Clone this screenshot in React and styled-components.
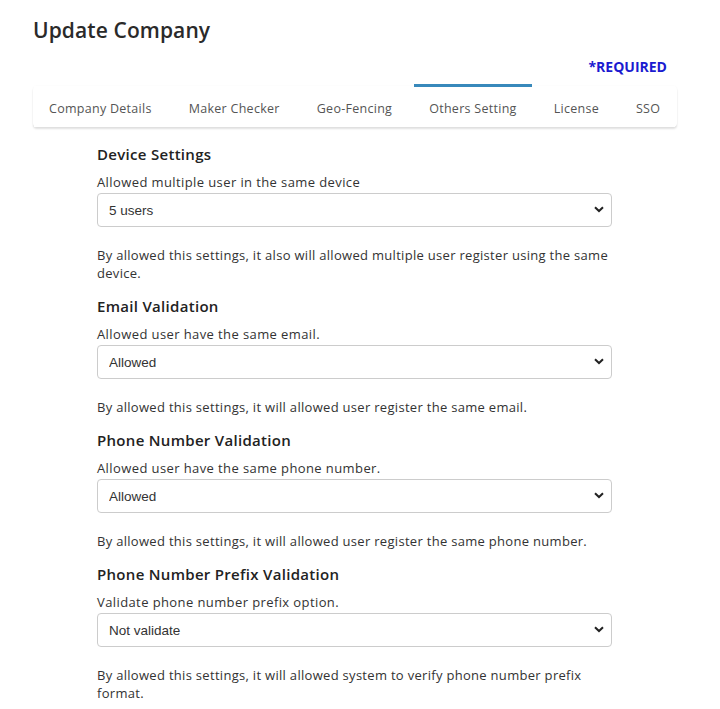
import React from 'react'
import styled, { createGlobalStyle } from 'styled-components'

const GlobalStyle = createGlobalStyle`
  body {
    margin: 0;
    background: #fff;
    font-family: "Open Sans", "Noto Sans", sans-serif;
    color: #333;
  }
`

const Page = styled.div`
  width: 720px;
  height: 709px;
  overflow: hidden;
  padding: 16px 43px 0 33px;
  box-sizing: border-box;
`

const Title = styled.h1`
  margin: 0;
  font-size: 21px;
  font-weight: 600;
  color: #2a2a2a;
  letter-spacing: 0.1px;
  line-height: 28px;
`

const Required = styled.div`
  text-align: right;
  margin: 13px 10px 0 0;
  font-size: 14px;
  font-weight: 700;
  color: #1b1bd0;
  line-height: 20px;
`

const TabBar = styled.div`
  display: flex;
  gap: 7px;
  margin-top: 9px;
  padding-left: 1px;
  height: 41px;
  background: #fff;
  border-radius: 4px;
  box-shadow: 0 2px 2px rgba(0, 0, 0, 0.12), 0 0 2px rgba(0, 0, 0, 0.04);
`

const Tab = styled.div`
  display: flex;
  align-items: center;
  flex-shrink: 0;
  white-space: nowrap;
  padding: 0 15px;
  font-size: 12.5px;
  letter-spacing: 0.28px;
  color: #555;
  background: #fff;
  box-sizing: border-box;
  height: ${p => (p.$active ? '43px' : '41px')};
  margin-top: ${p => (p.$active ? '-2px' : '0')};
  padding-top: ${p => (p.$active ? '2px' : '3px')};
  border-top: ${p => (p.$active ? '3px solid #3889bb' : 'none')};
  position: relative;
  z-index: ${p => (p.$active ? 1 : 0)};
`

const Content = styled.div`
  width: 515px;
  margin: 15px 0 0 64px;
`

const Section = styled.div`
  margin-bottom: 12px;
`

const Heading = styled.h2`
  margin: 0;
  font-size: 15px;
  font-weight: 600;
  letter-spacing: 0.3px;
  color: #222;
  line-height: 24px;
`

const Label = styled.div`
  font-size: 13px;
  letter-spacing: 0.4px;
  line-height: 20px;
  margin-top: 6px;
  color: #333;
`

const SelectWrap = styled.div`
  position: relative;
  margin-top: 1px;
`

const Select = styled.select`
  width: 100%;
  height: 34px;
  appearance: none;
  border: 1px solid #ccc;
  border-radius: 4px;
  background: #fff;
  padding: 0 30px 0 11px;
  font-family: "Liberation Sans", Arial, sans-serif;
  font-size: 13.5px;
  color: #333;
  outline: none;
`

const Chevron = styled.svg`
  position: absolute;
  right: 8px;
  top: 13px;
  pointer-events: none;
`

const Help = styled.p`
  margin: 19px 0 0;
  font-size: 13px;
  letter-spacing: 0.3px;
  line-height: 18px;
  color: #333;
`

const tabs = [
  { name: 'Company Details' },
  { name: 'Maker Checker' },
  { name: 'Geo-Fencing' },
  { name: 'Others Setting', active: true },
  { name: 'License' },
  { name: 'SSO' },
]

const sections = [
  {
    title: 'Device Settings',
    label: 'Allowed multiple user in the same device',
    value: '5 users',
    help: 'By allowed this settings, it also will allowed multiple user register using the same device.',
  },
  {
    title: 'Email Validation',
    label: 'Allowed user have the same email.',
    value: 'Allowed',
    help: 'By allowed this settings, it will allowed user register the same email.',
  },
  {
    title: 'Phone Number Validation',
    label: 'Allowed user have the same phone number.',
    value: 'Allowed',
    help: 'By allowed this settings, it will allowed user register the same phone number.',
  },
  {
    title: 'Phone Number Prefix Validation',
    label: 'Validate phone number prefix option.',
    value: 'Not validate',
    help: 'By allowed this settings, it will allowed system to verify phone number prefix format.',
  },
]

const App = () => {
  return (
    <Page>
      <GlobalStyle />
      <Title>Update Company</Title>
      <Required>*REQUIRED</Required>
      <TabBar>
        {tabs.map(t => (
          <Tab key={t.name} $active={t.active}>{t.name}</Tab>
        ))}
      </TabBar>
      <Content>
        {sections.map(s => (
          <Section key={s.title}>
            <Heading>{s.title}</Heading>
            <Label>{s.label}</Label>
            <SelectWrap>
              <Select defaultValue={s.value}>
                <option>{s.value}</option>
              </Select>
              <Chevron width="10" height="7" viewBox="0 0 10 7">
                <path d="M1 1.2 L5 5 L9 1.2" fill="none" stroke="#222" strokeWidth="2" />
              </Chevron>
            </SelectWrap>
            <Help>{s.help}</Help>
          </Section>
        ))}
      </Content>
    </Page>
  )
}

export default App
